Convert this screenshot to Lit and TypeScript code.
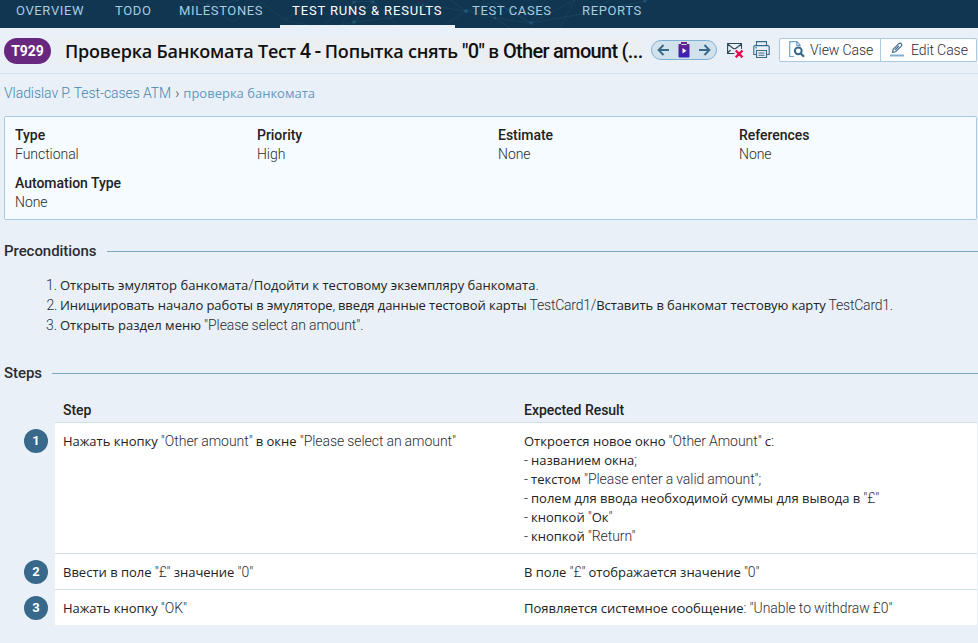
import { LitElement, html, css, svg } from "lit";
import { customElement } from "lit/decorators.js";

// Cyrillic runs use a different face from Latin ones.
const mixed = (s: string) =>
  s
    .split(/([\u0400-\u04FF]+(?:[ ]+[\u0400-\u04FF]+)*)/)
    .filter((p) => p !== "")
    .map((p) => (/[\u0400-\u04FF]/.test(p) ? html`<span class="cyr">${p}</span>` : p));

const NAV = ["OVERVIEW", "TODO", "MILESTONES", "TEST RUNS & RESULTS", "TEST CASES", "REPORTS"];
const FIELDS = [
  ["Type", "Functional"],
  ["Priority", "High"],
  ["Estimate", "None"],
  ["References", "None"],
  ["Automation Type", "None"],
];
const PRE = [
  "Открыть эмулятор банкомата/Подойти к тестовому экземпляру банкомата.",
  "Инициировать начало работы в эмуляторе, введя данные тестовой карты TestCard1/Вставить в банкомат тестовую карту TestCard1.",
  'Открыть раздел меню "Please select an amount".',
];
const STEPS: [string, string[]][] = [
  [
    'Нажать кнопку "Other amount" в окне "Please select an amount"',
    [
      'Откроется новое окно "Other Amount" с:',
      "- названием окна;",
      '- текстом "Please enter a valid amount";',
      '- полем для ввода необходимой суммы для вывода в "£"',
      '- кнопкой "Ок"',
      '- кнопкой "Return"',
    ],
  ],
  ['Ввести в поле "£" значение "0"', ['В поле "£" отображается значение "0"']],
  ['Нажать кнопку "OK"', ['Появляется системное сообщение: "Unable to withdraw £0"']],
];

const mesh = svg`
  <g stroke="#2b6284" stroke-width=".7" opacity=".4" fill="none">
    <path d="M190 0L208 5L180 18M208 5L232 22L262 3M208 5L240 0M262 3L285 20L320 28M285 20L310 2M320 28L354 2L373 1L354 22L330 28M354 2L340 28M354 22L390 18L425 5L466 11L440 28M390 18L423 1M466 11L495 18L531 23L495 2L466 11L450 0M495 18L510 28M531 23L575 0L560 28M531 23L582 14L610 0M495 2L531 23L545 0M582 14L645 1M354 22L373 1L390 18L400 28"/>
  </g>
  <g fill="#2b6284" opacity=".6">
    <circle cx="208" cy="5" r="1.5"/><circle cx="354" cy="2" r="1.6"/><circle cx="373" cy="2" r="1.6"/>
    <circle cx="354" cy="22" r="1.8"/><circle cx="466" cy="11" r="2"/><circle cx="495" cy="18" r="1.5"/>
    <circle cx="423" cy="5" r="1.3"/><circle cx="531" cy="23" r="1.7"/><circle cx="645" cy="1" r="1.5"/>
  </g>`;

@customElement("app-root")
export class AppRoot extends LitElement {
  static styles = css`
    :host {
      display: block;
      height: 643px;
      overflow: hidden;
      background: #e9f0f7;
      color: #2b2c30;
      font: 300 14px/19px Roboto, "Open Sans", sans-serif;
      letter-spacing: -0.05px;
      word-spacing: -0.3px;
    }
    * { box-sizing: border-box; }
    svg { display: block; flex: none; }
    .cyr {
      font-family: "Open Sans", "Noto Sans", sans-serif;
      font-size: 13px;
      font-weight: 400;
      line-height: 0;
      letter-spacing: 0;
      word-spacing: 0;
      color: #222;
    }
    nav {
      position: relative;
      height: 28px;
      background: #103651;
      padding-left: 4px;
      display: grid;
      grid-template-columns: 94px 59px 108px 175px 105px 86px;
      column-gap: 5px;
      overflow: hidden;
      font-size: 13px;
      font-weight: 400;
      word-spacing: 0;
    }
    .mesh { position: absolute; left: 0; top: 0; }
    .tab {
      position: relative;
      padding: 1px 0 0 12px;
      height: 28px;
      color: #a9cbe0;
      letter-spacing: 0.63px;
      white-space: nowrap;
    }
    .active { color: #fff; border-bottom: 3px solid #e9f0f7; letter-spacing: 0.87px; }
    header {
      height: 46px;
      border-bottom: 1px solid #cfe0ec;
      display: flex;
      align-items: center;
      padding: 0 1px 2px 4px;
    }
    .badge {
      width: 47px;
      height: 26px;
      margin-top: 2px;
      border-radius: 13px;
      background: #692880;
      color: #fff;
      font-weight: 700;
      line-height: 26px;
      text-align: center;
      flex: none;
    }
    h1 {
      margin: 2px 9px 0 7px;
      padding: 0 0 0 7px;
      width: 584px;
      flex: none;
      font-size: 20px;
      font-weight: 500;
      line-height: 26px;
      letter-spacing: -0.65px;
      color: #111;
      background: #ebeff2;
      white-space: nowrap;
    }
    h1 .cyr { color: #111; font-size: 18px; font-weight: 600; letter-spacing: -0.2px; }
    .pill {
      width: 66px;
      height: 20px;
      border: 1px solid #7fb0d2;
      border-radius: 10px;
      background: #d1e2ed;
      display: flex;
      align-items: center;
      justify-content: space-between;
      padding: 0 5px;
      flex: none;
    }
    .mail { margin-left: 10px; }
    .print { margin-left: 9px; }
    .buttons {
      margin-left: 9px;
      width: 198px;
      height: 24px;
      border: 1px solid #a8cbe2;
      border-radius: 2px;
      background: #fff;
      display: flex;
      flex: none;
      line-height: 22px;
    }
    .btn { display: flex; align-items: center; white-space: nowrap; }
    .view { width: 101px; padding-left: 9px; gap: 5px; border-right: 1px solid #a8cbe2; }
    .edit { padding-left: 9px; gap: 7px; }
    .crumbs { padding: 10px 4px 0; height: 42px; color: #4585b2; }
    .crumbs .cyr { color: #6498bd; margin-left: 1px; }
    .sep { color: #444; margin-left: 1px; }
    .info {
      margin: 0 1px 0 4px;
      height: 104px;
      background: #f6fbff;
      border: 1px solid #a8cbe2;
      border-radius: 2px;
      padding: 9px 0 0 10px;
      display: grid;
      grid-template-columns: 242px 241px 241px 1fr;
      grid-auto-rows: 48px;
    }
    b { display: block; font-weight: 500; color: #222; word-spacing: 0; letter-spacing: -0.03px; }
    h2 {
      margin: 0;
      padding-left: 4px;
      display: flex;
      align-items: center;
      font-size: 15px;
      font-weight: 500;
      line-height: 20px;
      color: #2b2d30;
    }
    h2::after { content: ""; flex: 1; height: 1px; background: #7ca8c6; margin-left: 10px; }
    .pre { margin-top: 21px; }
    ol { margin: 14px 0 28px; padding: 0 0 0 60px; line-height: 20px; white-space: nowrap; }
    li:nth-child(2) { letter-spacing: -0.22px; }
    li:nth-child(2) .cyr { letter-spacing: -0.07px; }
    .heads { margin: 18px 1px 0 55px; height: 21px; }
    .cols { display: grid; grid-template-columns: 461px 1fr; padding: 0 8px; white-space: nowrap; }
    .row { display: grid; grid-template-columns: 31px 1fr; padding: 0 1px 0 24px; }
    .num {
      margin-top: 7px;
      width: 24px;
      height: 24px;
      border-radius: 50%;
      background: #38688a;
      color: #fff;
      font-size: 13px;
      font-weight: 700;
      line-height: 24px;
      text-align: center;
    }
    .cell { background: #fff; border-top: 1px solid #cfe0e9; padding: 9px 8px 7px; }
  `;

  render() {
    return html`
      <nav>
        <svg class="mesh" width="660" height="28">${mesh}</svg>
        ${NAV.map((n, i) => html`<div class="tab ${i === 3 ? "active" : ""}">${n}</div>`)}
      </nav>
      <header>
        <div class="badge">T929</div>
        <h1>${mixed('Проверка Банкомата Тест 4 - Попытка снять "0" в Other amount (...')}</h1>
        <div class="pill">
          <svg width="13" height="12" viewBox="0 0 13 12" fill="none" stroke="#38688a" stroke-width="1.9"><path d="M12 6H2M6.5 1L1.6 6l4.9 5" /></svg>
          <svg width="12" height="16" viewBox="0 0 12 16">
            <defs><linearGradient id="g" x1="0" y1="0" x2="0" y2="1"><stop offset="0" stop-color="#6b2387" /><stop offset="1" stop-color="#3720b8" /></linearGradient></defs>
            <path d="M1 2H3V0h6V2h2Q11.500 2 11.500 3V14.500Q11.500 15.500 10.500 15.500H1.500Q.5 15.500 .5 14.500V3Q.5 2 1 2Z" fill="url(#g)" /><path d="M3.500 2.500h5" stroke="#d1e2ed" /><path d="M4.500 6v5.500l4-2.750z" fill="#fff" />
          </svg>
          <svg width="13" height="12" viewBox="0 0 13 12" fill="none" stroke="#38688a" stroke-width="1.9"><path d="M1 6h10M6.500 1l4.900 5-4.900 5" /></svg>
        </div>
        <svg class="mail" width="17" height="16" viewBox="0 0 17 16" fill="none">
          <path d="M7.500 11.500H.6V1.500H14.500V7M.6 2L6 6.200Q7.500 7.300 9 6.200L14.500 2M.6 11l3-3" stroke="#294754" stroke-width="1.100" />
          <path d="M8.700 8.500l6.800 6.800M15.500 8.500l-6.800 6.800" stroke="#e8064f" stroke-width="2.300" />
        </svg>
        <svg class="print" width="17" height="17" viewBox="0 0 17 17" fill="none" stroke="#38688a" stroke-width="1.100">
          <path d="M3.500 4.500V.6h10v3.900M3.500 13.500H.8V6Q.8 4.600 2.200 4.600H14.800Q16.200 4.600 16.200 6v7.500H13.500" /><path d="M3.500 9.500h10v7h-10zM5.500 12h6M5.500 14.300h6" />
          <path d="M2.300 6.800h1.600" stroke="#18b77c" stroke-width="1.600" />
        </svg>
        <div class="buttons">
          <div class="btn view">
            <svg width="16" height="17" viewBox="0 0 16 17" fill="none">
              <path d="M5 15.500H.7V.7H8L11 4V5.500M7.700 1v3.300H11" stroke="#74a5c7" stroke-width="1.200" />
              <circle cx="9.300" cy="9.800" r="3.400" stroke="#38688a" stroke-width="2" /><path d="M11.500 12.200l3.500 3.600" stroke="#38688a" stroke-width="2.200" />
            </svg>View Case
          </div>
          <div class="btn edit">
            <svg width="14" height="15" viewBox="0 0 14 15" fill="none">
              <path d="M2.500 10.300L3.200 7.300 8.800 1.700Q10.200.6 11.300 1.800 12.300 3 11.200 4.200L5.600 9.700ZM5 7.800L8.800 4" stroke="#38688a" stroke-width="1.100" /><path d="M0 13.500h14" stroke="#7fafd1" stroke-width="2" />
            </svg>Edit Case
          </div>
        </div>
      </header>
      <div class="crumbs">Vladislav P. Test-cases ATM <span class="sep">›</span> ${mixed("проверка банкомата")}</div>
      <section class="info">${FIELDS.map(([k, v]) => html`<div><b>${k}</b>${v}</div>`)}</section>
      <h2 class="pre">Preconditions</h2>
      <ol>${PRE.map((p) => html`<li>${mixed(p)}</li>`)}</ol>
      <h2>Steps</h2>
      <div class="cols heads"><b>Step</b><b>Expected Result</b></div>
      ${STEPS.map(
        ([s, r], i) => html`<div class="row">
          <div class="num">${i + 1}</div>
          <div class="cols cell"><div>${mixed(s)}</div><div>${r.map((l) => html`<div>${mixed(l)}</div>`)}</div></div>
        </div>`
      )}
    `;
  }
}
